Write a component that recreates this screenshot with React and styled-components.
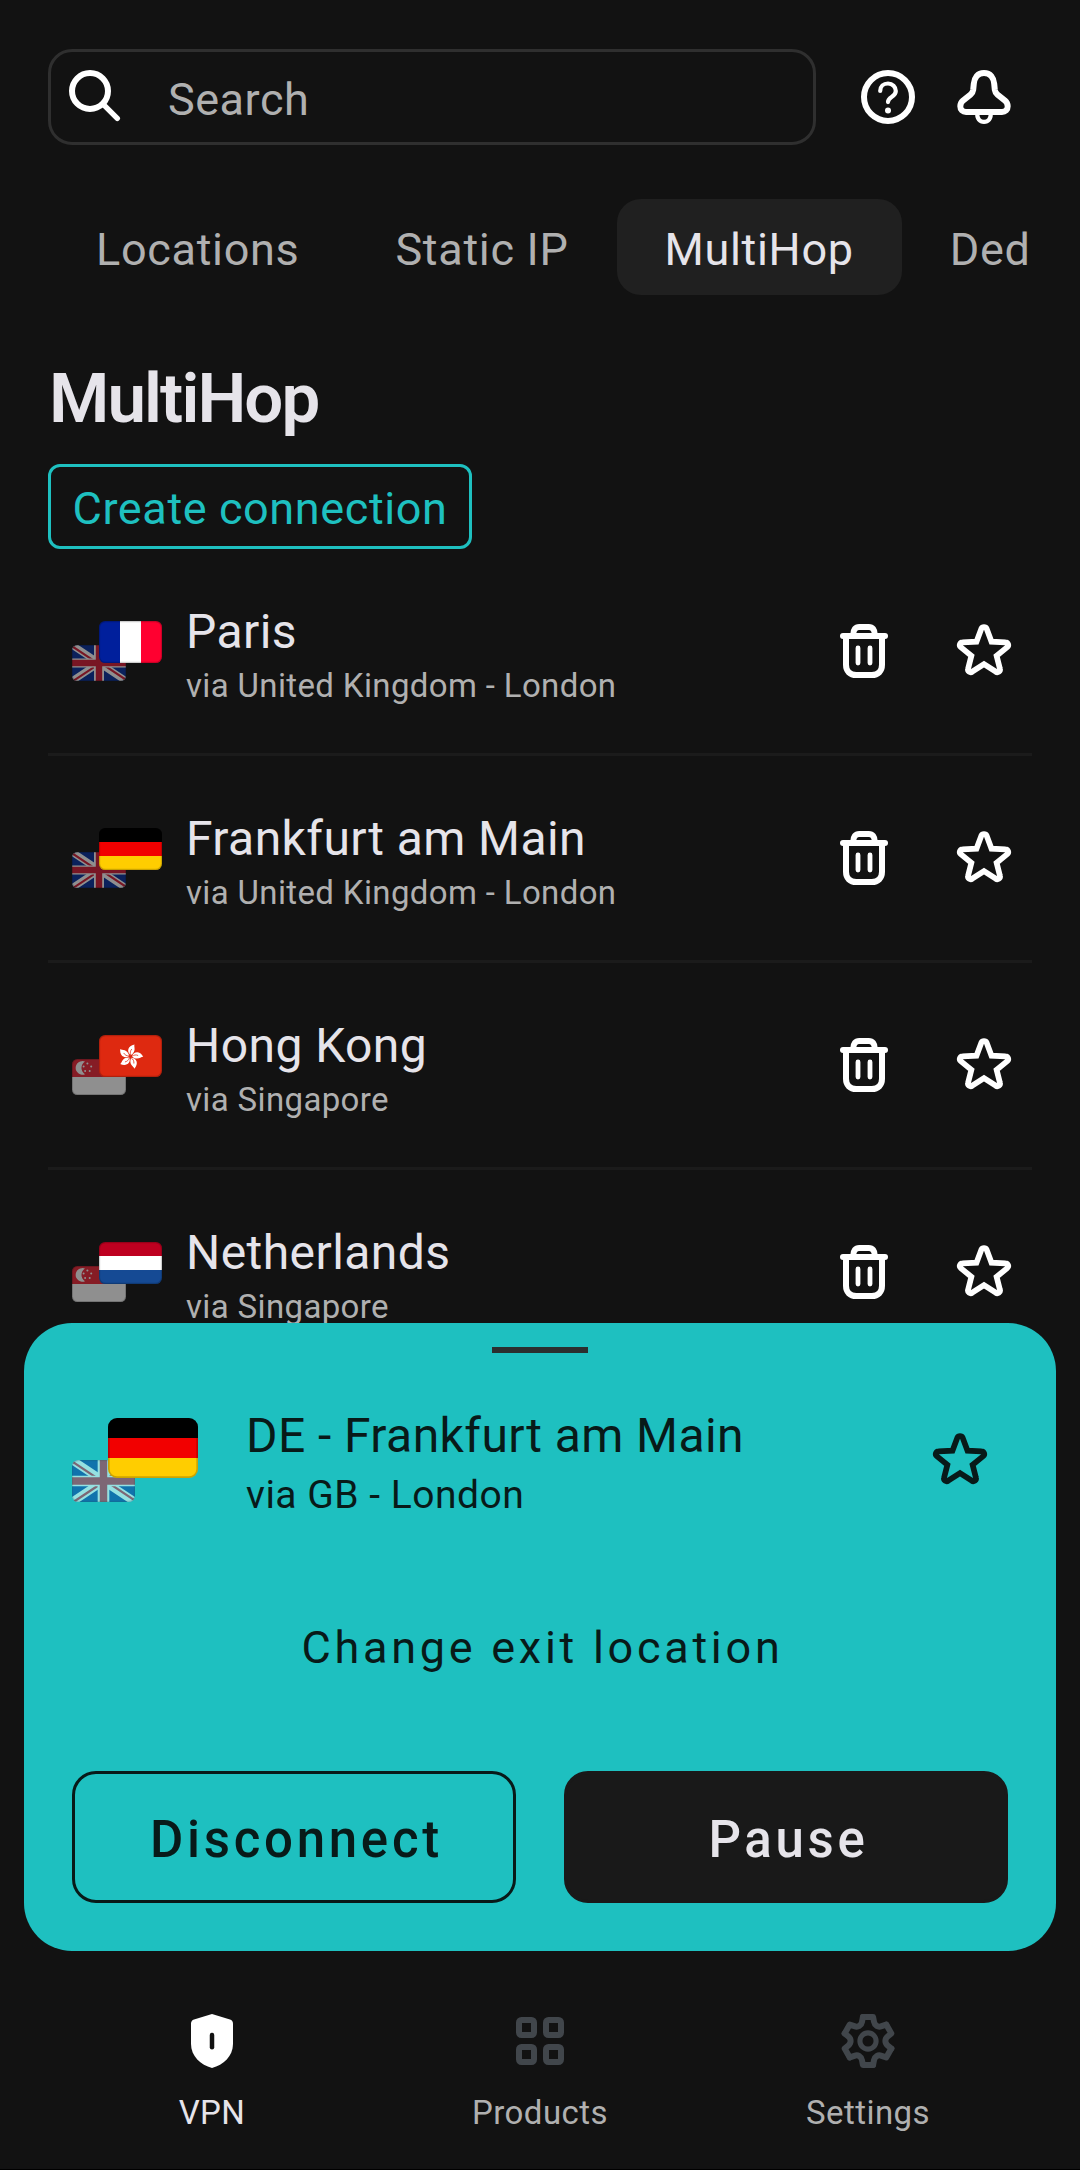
import React from 'react'
import styled, { createGlobalStyle, css } from 'styled-components'

const colors = {
  background: '#121212',
  surface: '#202020',
  outline: '#2f2f2f',
  divider: '#1b1b1b',
  accent: '#1ec0c0',
  onAccent: '#081a19',
  text: '#e6e4ea',
  muted: '#b0b0b0',
  inactive: '#41464b'
}

const GlobalStyle = createGlobalStyle`
  * {
    box-sizing: border-box;
  }
  body {
    margin: 0;
    background: ${colors.background};
    font-family: Roboto, 'Liberation Sans', sans-serif;
  }
  button {
    margin: 0;
    padding: 0;
    border: 0;
    background: none;
    color: inherit;
    font: inherit;
    letter-spacing: inherit;
  }
`

const Screen = styled.div`
  display: flex;
  flex-direction: column;
  width: 1080px;
  height: 2170px;
  overflow: hidden;
  background: ${colors.background};
  border-bottom: 1px solid #000;
  color: ${colors.text};
  letter-spacing: 0.43px;
`

const Content = styled.main`
  flex: 1;
  min-height: 0;
  overflow: hidden;
  padding: 49px 48px 0;
`

/* ---------- icons ---------- */

const Svg = styled.svg`
  display: block;
  flex: none;
  width: 72px;
  height: 72px;
  fill: none;
  stroke: currentColor;
  stroke-width: ${props => props.$stroke || 2};
  stroke-linecap: round;
  stroke-linejoin: round;
`

const Icon = props => <Svg viewBox="0 0 24 24" {...props} />

const SearchIcon = () => (
  <Icon>
    <circle cx="10" cy="10" r="6" />
    <path d="M14.6 14.6L19.1 19.1" strokeWidth="1.8" />
  </Icon>
)

const HelpIcon = () => (
  <Icon>
    <circle cx="12" cy="12" r="8" />
    <path
      strokeWidth="1.4"
      d="M9.4 10C9.4 8.5 10.5 7.5 12 7.5S14.6 8.6 14.6 10C14.6 11 14 11.5 13.2 12C12.4 12.5 12 13 12 13.7"
    />
    <circle cx="12" cy="16.5" r="1" fill="currentColor" stroke="none" />
  </Icon>
)

const BellIcon = () => (
  <Icon>
    <path d="M12 4C9.8 4 8.8 5.6 8.6 7.6L8.4 9.6C8.3 10.3 8 10.8 7.5 11.2L5.1 13.1C4.4 13.7 4.1 14.4 4.1 15.1C4.1 16.2 4.9 17 6 17H18C19.1 17 19.9 16.2 19.9 15.1C19.9 14.4 19.6 13.7 18.9 13.1L16.5 11.2C16 10.8 15.7 10.3 15.6 9.6L15.4 7.6C15.2 5.6 14.2 4 12 4Z" />
    <path d="M9.8 17.6C9.6 19.2 10.6 20.3 12 20.3S14.4 19.2 14.2 17.6" strokeWidth="1.4" />
  </Icon>
)

const TrashIcon = () => (
  <Icon>
    <path d="M5 7H19" />
    <path d="M8.4 6.6C8.4 4.9 9.2 4 10.4 4H13.6C14.8 4 15.6 4.9 15.6 6.6" />
    <path d="M6 7.5V16.6C6 18.7 7.3 20 9.4 20H14.6C16.7 20 18 18.7 18 16.6V7.5" />
    <path d="M10 11V16M14 11V16" strokeWidth="1.6" />
  </Icon>
)

const StarIcon = () => (
  <Icon $stroke={1.9}>
    <path
      strokeLinejoin="miter"
      d="M11.1 4.6A1 1 0 0 1 12.9 4.6L14.5 8.9L19.2 9.1A.9 .9 0 0 1 19.75 10.7L16.2 13.6L17.3 17.9A.9 .9 0 0 1 15.9 18.9L12 16.4L8.1 18.9A.9 .9 0 0 1 6.7 17.9L7.8 13.6L4.25 10.7A.9 .9 0 0 1 4.8 9.1L9.5 8.9Z"
    />
  </Icon>
)

const ShieldIcon = () => (
  <Icon>
    <path
      fill="currentColor"
      stroke="none"
      d="M12 3L18 4.8C18.6 5 19 5.5 19 6.2V13C19 17 15.8 20 12 21C8.2 20 5 17 5 13V6.2C5 5.5 5.4 5 6 4.8Z"
    />
    <path d="M12 10V14.1" stroke={colors.background} strokeWidth="1.5" />
  </Icon>
)

const ProductsIcon = () => (
  <Icon>
    <rect x="5" y="5" width="5" height="5" rx="0.8" />
    <rect x="14" y="5" width="5" height="5" rx="0.8" />
    <rect x="5" y="14" width="5" height="5" rx="0.8" />
    <rect x="14" y="14" width="5" height="5" rx="0.8" />
  </Icon>
)

const GearIcon = () => (
  <Icon>
    {[0, 60, 120, 180, 240, 300].map(angle => (
      <path
        key={angle}
        transform={`rotate(${angle} 12 12)`}
        d="M10.3 4H13.7L14 5.6C14.25 6.9 15.29 7.5 16.54 7.07L18.08 6.53"
      />
    ))}
    <circle cx="12" cy="12" r="2.7" strokeWidth="1.7" />
  </Icon>
)

/* ---------- flags ---------- */

const FlagSvg = styled.svg`
  position: absolute;
  display: block;
  width: ${props => props.$width}px;
  height: ${props => (props.$width * 2) / 3}px;
  border-radius: ${props => props.$width * 0.1}px;
  ${props =>
    props.$back
      ? css`
          left: 0;
          bottom: 0;
          opacity: 0.53;
        `
      : css`
          right: 0;
          top: 0;
        `}
`

const Flags = {
  fr: () => (
    <>
      <path fill="#001f9c" d="M0 0H18V36H0z" />
      <path fill="#fff" d="M18 0H36V36H18z" />
      <path fill="#ff0030" d="M36 0H54V36H36z" />
    </>
  ),
  de: () => (
    <>
      <path fill="#000" d="M0 0H54V12H0z" />
      <path fill="#f20000" d="M0 12H54V24H0z" />
      <path fill="#ffcd00" d="M0 24H54V36H0z" />
    </>
  ),
  nl: () => (
    <>
      <path fill="#be0020" d="M0 0H54V12H0z" />
      <path fill="#fff" d="M0 12H54V24H0z" />
      <path fill="#154a94" d="M0 24H54V36H0z" />
    </>
  ),
  hk: () => (
    <>
      <path fill="#de2910" d="M0 0H54V36H0z" />
      {[10, 82, 154, 226, 298].map(angle => (
        <g key={angle} transform={`translate(27 18.5) rotate(${angle})`}>
          <path fill="#fff" d="M0 -1.2C-4.2 -3.4 -4 -8.6 1.6 -10.8C1 -8.8 4.8 -5.6 0 -1.2Z" />
          <path stroke="#de2910" strokeWidth="0.6" fill="none" d="M0 -1.2C-1.2 -3.2 -1 -5 0 -6.6" />
        </g>
      ))}
    </>
  ),
  sg: () => (
    <>
      <path fill="#ee2536" d="M0 0H54V18H0z" />
      <path fill="#fff" d="M0 18H54V36H0z" />
      <path fill="#fff" d="M13 2.6A6.8 6.8 0 1 0 13 15.2A7.4 7.4 0 0 1 13 2.6Z" />
      {[[15.4, 4.6], [11.6, 7.6], [19.2, 7.6], [13.1, 12], [17.7, 12]].map(([x, y]) => (
        <circle key={`${x}-${y}`} cx={x} cy={y} r="1" fill="#fff" />
      ))}
    </>
  ),
  gb: () => (
    <>
      <path fill="#05309c" d="M0 0H54V36H0z" />
      <path stroke="#fff" strokeWidth="7" d="M0 0L54 36M54 0L0 36" />
      <path stroke="#d21a34" strokeWidth="2" d="M0 1.2L27 19.2M27 16.8L54 34.8M54 -.2L27 17.8M27 18.8L0 36.8" />
      <path stroke="#fff" strokeWidth="10" d="M27 0V36" />
      <path stroke="#fff" strokeWidth="9" d="M0 18H54" />
      <path stroke="#d21a34" strokeWidth="6.4" d="M27 0V36M0 18H54" />
    </>
  )
}

const Flag = ({ code, width, back }) => {
  const Art = Flags[code]
  return (
    <FlagSvg viewBox="0 0 54 36" $width={width} $back={back}>
      <Art />
      <rect width="54" height="36" rx="5.4" fill="none" stroke="#000" strokeOpacity="0.2" strokeWidth="2" />
    </FlagSvg>
  )
}

const FlagBox = styled.div`
  position: relative;
  flex: none;
  width: ${props => (props.$large ? 126 : 90)}px;
  height: ${props => (props.$large ? 84 : 60)}px;
`

const FlagPair = ({ exit, via, large }) => (
  <FlagBox $large={large}>
    <Flag code={via} width={large ? 63 : 54} back />
    <Flag code={exit} width={large ? 90 : 63} />
  </FlagBox>
)

/* ---------- top of the screen ---------- */

const TopBar = styled.header`
  display: flex;
  align-items: center;
  justify-content: space-between;
  height: 96px;
  padding-right: 12px;
`

const SearchField = styled.div`
  display: flex;
  align-items: center;
  gap: 36px;
  width: 768px;
  height: 96px;
  padding-left: 9px;
  border: 3px solid ${colors.outline};
  border-radius: 24px;
  color: #fff;
`

const Placeholder = styled.span`
  padding-top: 5px;
  font-size: 45px;
  line-height: 56px;
  letter-spacing: 0.5px;
  color: ${colors.muted};
`

const IconGroup = styled.div`
  display: flex;
  flex: none;
  gap: ${props => props.$gap}px;
`

const IconButton = styled.button`
  flex: none;
  color: ${props => props.$color || '#fff'};
`

const Tabs = styled.nav`
  display: flex;
  margin-top: 54px;
  overflow: hidden;
`

const Tab = styled.button`
  flex: none;
  height: 96px;
  padding: 5px 48px 0;
  border-radius: 24px;
  font-size: 45px;
  letter-spacing: 0.68px;
  color: ${props => (props.$active ? colors.text : colors.muted)};
  background: ${props => (props.$active ? colors.surface : 'transparent')};
`

const Heading = styled.h1`
  margin: 64px 0 25px;
  padding-left: 1px;
  font-size: 69px;
  font-weight: 600;
  line-height: 80px;
  letter-spacing: -1.9px;
`

const CreateButton = styled.button`
  display: block;
  width: 424px;
  height: 85px;
  padding-top: 4px;
  border: 3px solid ${colors.accent};
  border-radius: 12px;
  font-size: 45px;
  letter-spacing: 0.6px;
  color: ${colors.accent};
  white-space: nowrap;
`

/* ---------- connections ---------- */

const Row = styled.li`
  display: flex;
  align-items: center;
  height: 207px;
  padding: 0 12px 0 24px;
  border-bottom: 3px solid ${colors.divider};
`

const List = styled.ul`
  margin: 0;
  padding: 0;
  list-style: none;
`

const RowText = styled.div`
  flex: 1;
  padding: 10px 0 0 24px;
  white-space: nowrap;
`

const RowTitle = styled.div`
  font-size: 48px;
  line-height: 56px;
`

const RowSubtitle = styled.div`
  margin-top: 3px;
  font-size: 33px;
  line-height: 46px;
  letter-spacing: 0.36px;
  color: ${colors.muted};
`

const Connection = ({ name, via, exitFlag, viaFlag }) => (
  <Row>
    <FlagPair exit={exitFlag} via={viaFlag} />
    <RowText>
      <RowTitle>{name}</RowTitle>
      <RowSubtitle>{via}</RowSubtitle>
    </RowText>
    <IconGroup $gap={48}>
      <IconButton>
        <TrashIcon />
      </IconButton>
      <IconButton>
        <StarIcon />
      </IconButton>
    </IconGroup>
  </Row>
)

/* ---------- current connection ---------- */

const Sheet = styled.section`
  display: flex;
  flex-direction: column;
  flex: none;
  height: 628px;
  margin: 0 24px;
  padding: 24px 48px 48px;
  border-radius: 48px;
  background: ${colors.accent};
  color: ${colors.onAccent};
`

const Handle = styled.div`
  align-self: center;
  width: 96px;
  height: 6px;
  background: #2b2f2f;
`

const SheetHeader = styled.div`
  display: flex;
  align-items: center;
  height: 110px;
  margin-top: 52px;
  padding-right: 12px;
`

const SheetText = styled.div`
  flex: 1;
  padding: 5px 0 0 48px;
  white-space: nowrap;
`

const SheetTitle = styled.div`
  font-size: 48px;
  line-height: 56px;
`

const SheetSubtitle = styled.div`
  margin-top: 8px;
  font-size: 39px;
  line-height: 46px;
  letter-spacing: 0.5px;
`

const ChangeLocation = styled.button`
  margin-top: 105px;
  padding-left: 5px;
  font-size: 45px;
  line-height: 56px;
  letter-spacing: 3.72px;
`

const Actions = styled.div`
  display: grid;
  grid-template-columns: 1fr 1fr;
  gap: 48px;
  margin-top: auto;
`

const ActionButton = styled.button`
  height: 132px;
  padding: 5px 0 0 5px;
  border: 3px solid ${props => (props.$filled ? '#191919' : colors.onAccent)};
  border-radius: 24px;
  background: ${props => (props.$filled ? '#191919' : 'transparent')};
  color: ${props => (props.$filled ? colors.text : colors.onAccent)};
  font-size: 51px;
  font-weight: 500;
  letter-spacing: 3.7px;
`

/* ---------- bottom navigation ---------- */

const BottomNav = styled.nav`
  display: grid;
  grid-template-columns: repeat(3, 1fr);
  flex: none;
  height: 218px;
  padding: 54px 48px 0;
`

const NavItem = styled.a`
  display: flex;
  flex-direction: column;
  align-items: center;
  gap: 16px;
  color: ${props => (props.$active ? '#fff' : colors.inactive)};
`

const NavLabel = styled.span`
  font-size: 33px;
  line-height: 40px;
  color: ${props => (props.$active ? colors.text : colors.muted)};
`

const tabs = ['Locations', 'Static IP', 'MultiHop', 'Ded']

const connections = [
  { name: 'Paris', via: 'via United Kingdom - London', exitFlag: 'fr', viaFlag: 'gb' },
  { name: 'Frankfurt am Main', via: 'via United Kingdom - London', exitFlag: 'de', viaFlag: 'gb' },
  { name: 'Hong Kong', via: 'via Singapore', exitFlag: 'hk', viaFlag: 'sg' },
  { name: 'Netherlands', via: 'via Singapore', exitFlag: 'nl', viaFlag: 'sg' }
]

const navItems = [
  { label: 'VPN', NavIcon: ShieldIcon, active: true },
  { label: 'Products', NavIcon: ProductsIcon },
  { label: 'Settings', NavIcon: GearIcon }
]

export default function App() {
  return (
    <>
      <GlobalStyle />
      <Screen>
        <Content>
          <TopBar>
            <SearchField>
              <SearchIcon />
              <Placeholder>Search</Placeholder>
            </SearchField>
            <IconGroup $gap={24}>
              <IconButton>
                <HelpIcon />
              </IconButton>
              <IconButton>
                <BellIcon />
              </IconButton>
            </IconGroup>
          </TopBar>
          <Tabs>
            {tabs.map(tab => (
              <Tab key={tab} $active={tab === 'MultiHop'}>
                {tab}
              </Tab>
            ))}
          </Tabs>
          <Heading>MultiHop</Heading>
          <CreateButton>Create connection</CreateButton>
          <List>
            {connections.map(connection => (
              <Connection key={connection.name} {...connection} />
            ))}
          </List>
        </Content>
        <Sheet>
          <Handle />
          <SheetHeader>
            <FlagPair exit="de" via="gb" large />
            <SheetText>
              <SheetTitle>DE - Frankfurt am Main</SheetTitle>
              <SheetSubtitle>via GB - London</SheetSubtitle>
            </SheetText>
            <IconButton $color={colors.onAccent}>
              <StarIcon />
            </IconButton>
          </SheetHeader>
          <ChangeLocation>Change exit location</ChangeLocation>
          <Actions>
            <ActionButton>Disconnect</ActionButton>
            <ActionButton $filled>Pause</ActionButton>
          </Actions>
        </Sheet>
        <BottomNav>
          {navItems.map(({ label, NavIcon, active }) => (
            <NavItem key={label} $active={active}>
              <NavIcon />
              <NavLabel $active={active}>{label}</NavLabel>
            </NavItem>
          ))}
        </BottomNav>
      </Screen>
    </>
  )
}
